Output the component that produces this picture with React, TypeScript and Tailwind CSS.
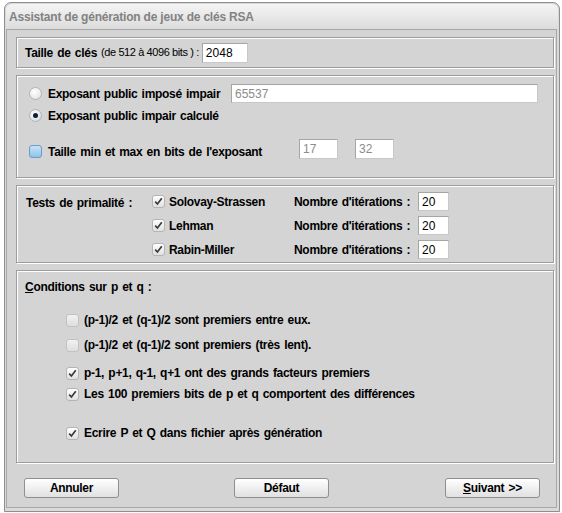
import React from 'react';

const font = "font-['Liberation_Sans',Arial,sans-serif]";

function Panel({ className, children }: { className?: string; children: React.ReactNode }) {
  return (
    <div
      className={`border border-[#9d9d9d] shadow-[inset_1px_1px_0_#ffffff,1px_1px_0_#ffffff] ${className ?? ''}`}
    >
      {children}
    </div>
  );
}

function Label({ children, className }: { children: React.ReactNode; className?: string }) {
  return (
    <span
      className={`text-[12px] font-bold tracking-[-0.3px] [word-spacing:1.2px] text-black leading-none whitespace-nowrap ${className ?? ''}`}
    >
      {children}
    </span>
  );
}

function TextBox({ value, className, muted }: { value: string; className?: string; muted?: boolean }) {
  return (
    <div
      className={`bg-white border border-[#a5a5a5] border-b-[#c8c8c8] border-r-[#c8c8c8] flex items-center pl-[3px] text-[12px] leading-none shrink-0 ${
        muted ? 'text-[#8c8c8c]' : 'text-black'
      } ${className ?? ''}`}
    >
      {value}
    </div>
  );
}

function Radio({ checked }: { checked?: boolean }) {
  return (
    <span
      className={`w-[13px] h-[13px] rounded-full border border-[#b3b3b3] flex items-center justify-center shrink-0 ${
        checked
          ? 'bg-[radial-gradient(circle_at_40%_35%,#ffffff,#bcd6e6)]'
          : 'bg-[radial-gradient(circle_at_40%_35%,#ffffff,#dedede)]'
      }`}
    >
      {checked && <span className="w-[5px] h-[5px] rounded-full bg-[#1a1a2a]" />}
    </span>
  );
}

function Check({ checked, blue, disabled }: { checked?: boolean; blue?: boolean; disabled?: boolean }) {
  const bg = blue
    ? 'bg-[linear-gradient(180deg,#c6e3f7,#8fc3e8)] border-[#6a9cc4]'
    : disabled
    ? 'bg-[linear-gradient(180deg,#f2f2f2,#dedede)] border-[#c2c2c2]'
    : 'bg-[linear-gradient(180deg,#ffffff,#e0e0e0)] border-[#b4b4b4]';
  return (
    <span className={`w-[13px] h-[13px] rounded-[3px] border flex items-center justify-center shrink-0 ${bg}`}>
      {checked && (
        <svg width="9" height="9" viewBox="0 0 9 9">
          <path d="M1.2 4.6 L3.4 7 L7.8 1.2" fill="none" stroke="#3a3a3a" strokeWidth="1.7" />
        </svg>
      )}
    </span>
  );
}

function Button({ children, className }: { children: React.ReactNode; className?: string }) {
  return (
    <div
      className={`w-[95px] h-[20px] rounded-[3px] border border-[#8f8f8f] bg-[linear-gradient(180deg,#ffffff_0%,#f1f1f1_45%,#e0e0e0_100%)] flex items-center justify-center shrink-0 ${className ?? ''}`}
    >
      <Label>{children}</Label>
    </div>
  );
}

const conditions = [
  { text: '(p-1)/2 et (q-1)/2 sont premiers entre eux.', checked: false, mt: 'mt-[20px]' },
  { text: '(p-1)/2 et (q-1)/2 sont premiers (très lent).', checked: false, mt: 'mt-[11px]' },
  { text: 'p-1, p+1, q-1, q+1 ont des grands facteurs premiers', checked: true, mt: 'mt-[14px]' },
  { text: 'Les 100 premiers bits de p et q comportent des différences', checked: true, mt: 'mt-[7px]' },
  { text: 'Ecrire P et Q dans fichier après génération', checked: true, mt: 'mt-[25px]' },
];

export default function App() {
  return (
    <div className={`w-[562px] h-[513px] bg-white pl-[4px] pt-[2px] ${font}`}>
      <div className="w-[556px] h-[510px] border border-[#8e8e8e] rounded-t-[7px] bg-[#dadada] p-[1px] flex flex-col">
        <div className="h-[25px] rounded-t-[6px] bg-[linear-gradient(180deg,#f4f4f4,#dcdcdc)] flex items-center pl-[3px]">
          <span className="text-[12px] font-bold tracking-[-0.2px] text-[#828282] leading-none">
            Assistant de génération de jeux de clés RSA
          </span>
        </div>
        <div className="flex-1 mr-[1px] mb-[2px] border border-[#a8a8a8] bg-[#d4d4d4] pl-[9px] pr-[2px] pt-[7px] flex flex-col">
          <Panel className="h-[31px] flex items-center pl-[8px]">
            <Label>Taille de clés</Label>
            <span className="ml-[4px] text-[11px] tracking-[-0.4px] leading-none">(de 512 à 4096 bits ) :</span>
            <TextBox value="2048" className="ml-[3px] w-[46px] h-[20px]" />
          </Panel>

          <Panel className="mt-[7px] h-[103px] flex flex-col pl-[12px] pt-[8px]">
            <div className="h-[19px] flex items-center">
              <div className="w-[202px] flex items-center">
                <Radio />
                <Label className="ml-[6px]">Exposant public imposé impair</Label>
              </div>
              <TextBox value="65537" muted className="w-[307px] h-[19px]" />
            </div>
            <div className="mt-[3px] h-[19px] flex items-center">
              <Radio checked />
              <Label className="ml-[6px]">Exposant public impair calculé</Label>
            </div>
            <div className="mt-[14px] h-[20px] flex items-center">
              <div className="w-[270px] flex items-center mt-[5px]">
                <Check blue />
                <Label className="ml-[6px]">Taille min et max en bits de l'exposant</Label>
              </div>
              <TextBox value="17" muted className="w-[39px] h-[20px]" />
              <TextBox value="32" muted className="ml-[17px] w-[39px] h-[20px]" />
            </div>
          </Panel>

          <Panel className="mt-[7px] h-[78px] pl-[9px] pt-[6px]">
            {['Solovay-Strassen', 'Lehman', 'Rabin-Miller'].map((name, i) => (
              <div key={name} className={`h-[19px] flex items-center ${i > 0 ? 'mt-[5px]' : ''}`}>
                <div className="w-[126px]">{i === 0 && <Label>Tests de primalité :</Label>}</div>
                <Check checked />
                <Label className="ml-[4px] w-[125px]">{name}</Label>
                <Label className="w-[124px]">Nombre d'itérations :</Label>
                <TextBox value="20" className="w-[31px] h-[19px]" />
              </div>
            ))}
          </Panel>

          <Panel className="mt-[7px] h-[193px] flex flex-col pl-[8px] pt-[10px]">
            <Label>
              <span className="underline">C</span>onditions sur p et q :
            </Label>
            <div className="pl-[41px] flex flex-col">
              {conditions.map((c) => (
                <div key={c.text} className={`${c.mt} h-[14px] flex items-center`}>
                  <Check checked={c.checked} disabled={!c.checked} />
                  <Label className="ml-[5px]">{c.text}</Label>
                </div>
              ))}
            </div>
          </Panel>

          <div className="mt-[15px] flex items-center pl-[8px]">
            <Button>Annuler</Button>
            <Button className="ml-[115px]">Défaut</Button>
            <Button className="ml-[116px]">
              <span className="underline">S</span>uivant &gt;&gt;
            </Button>
          </div>
        </div>
      </div>
    </div>
  );
}
